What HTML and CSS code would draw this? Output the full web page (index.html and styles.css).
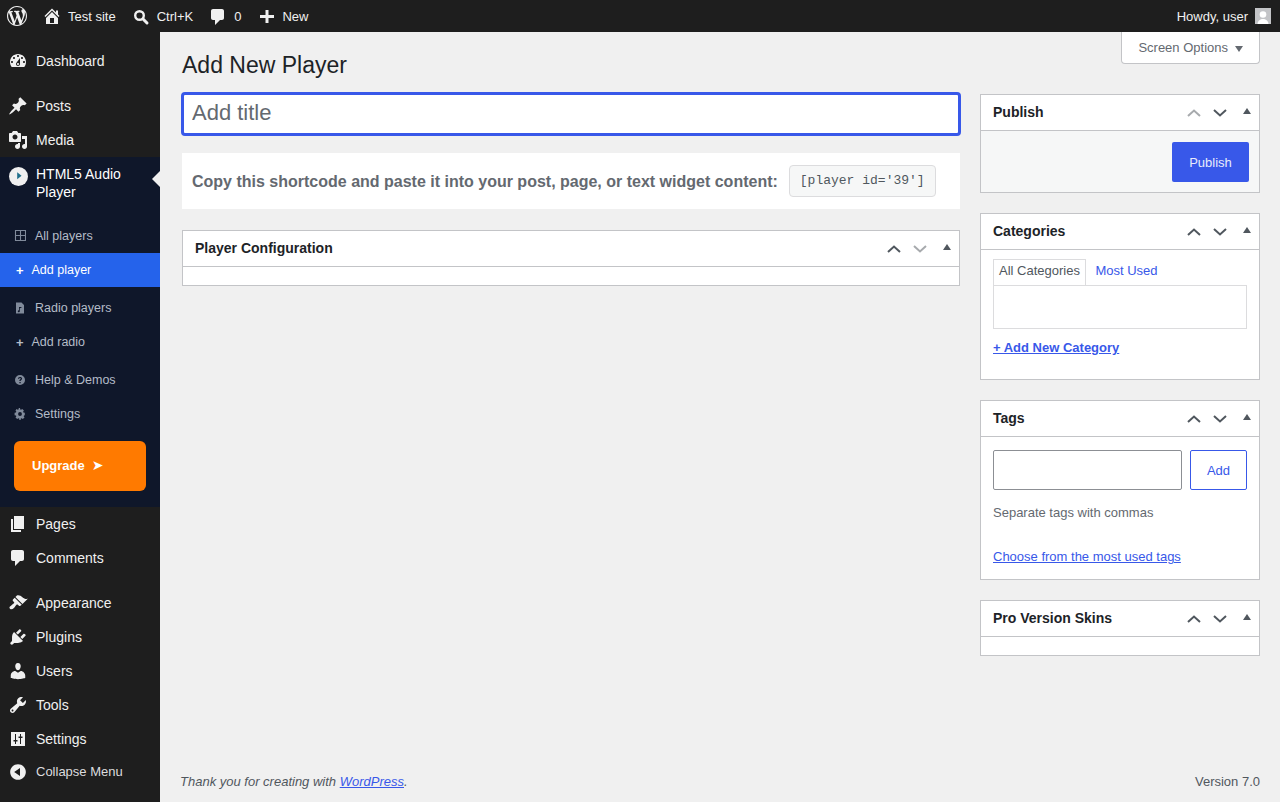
FILE: index.html
```html
<!DOCTYPE html>
<html lang="en">
<head>
  <meta charset="UTF-8" />
  <title>Add New Player</title>
  <link rel="stylesheet" href="styles.css">
</head>
<body>

  <!-- top bar -->
  <header class="adminbar">
    <div class="bar-group">
      <a class="bar-item bar-logo"><svg class="bar-icon logo-icon" viewBox="0 0 20 20"><path d="M20 10c0-5.51-4.49-10-10-10C4.480 0 0 4.490 0 10c0 5.520 4.480 10 10 10 5.510 0 10-4.480 10-10zM7.780 15.370L4.370 6.220c.550-.020 1.170-.080 1.170-.080.500-.060.440-1.130-.060-1.110 0 0-1.450.110-2.370.110-.180 0-.370 0-.580-.010C4.120 2.690 6.890 1.050 10 1.050c2.320 0 4.430.870 6.030 2.320-.680-.110-1.650.390-1.650 1.580 0 .740.450 1.360.900 2.100.350.610.550 1.360.550 2.460 0 1.490-1.400 5-1.400 5l-3.030-8.350c.540-.020.820-.170.820-.170.500-.050.440-1.250-.060-1.220 0 0-1.440.120-2.380.120-.870 0-2.330-.120-2.330-.120-.500-.030-.560 1.200-.060 1.220l.920.080 1.260 3.410zM17.410 10c.240-.640.740-1.870.430-4.250.700 1.290 1.050 2.710 1.050 4.250 0 3.290-1.730 6.240-4.400 7.780.970-2.590 1.940-5.200 2.920-7.780zM6.100 18.090C3.120 16.650 1.110 13.530 1.110 10c0-1.300.230-2.480.720-3.590C3.250 10.300 4.670 14.200 6.100 18.090zm4.030-6.630l2.580 6.980c-.860.290-1.760.450-2.710.450-.790 0-1.570-.110-2.290-.330.810-2.380 1.620-4.740 2.420-7.100z"/></svg></a>
      <a class="bar-item"><svg class="bar-icon" viewBox="0 0 20 20"><path d="M16 8.500l1.530 1.530-1.060 1.060L10 4.620l-6.470 6.470-1.060-1.060L10 2.500l4 4v-2h2v4zm-6-2.460l6 5.990V18H4v-5.970zM12 17v-5H8v5h4z"/></svg>Test site</a>
      <a class="bar-item bar-search"><svg class="bar-icon" viewBox="0 0 20 20"><circle class="loupe" cx="7.500" cy="9.500" r="4.300"/><path class="loupe-handle" d="M11.300 13.300L15 17"/></svg>Ctrl+K</a>
      <a class="bar-item bar-comments"><svg class="bar-icon" viewBox="0 0 20 20"><path d="M5 2h9c1.100 0 2 .9 2 2v7c0 1.100-.9 2-2 2h-2l-5 5v-5H5c-1.100 0-2-.9-2-2V4c0-1.100.9-2 2-2z"/></svg>0</a>
      <a class="bar-item bar-new"><svg class="bar-icon" viewBox="0 0 20 20"><path d="M17 9v3h-5.500v5h-3v-5H3V9h5.500V4h3v5z"/></svg>New</a>
    </div>
    <a class="bar-item bar-user">Howdy, user<span class="avatar"><svg viewBox="0 0 16 16"><circle cx="8" cy="6.500" r="3.300"/><path d="M2.500 16c.3-3.500 2.800-5 5.500-5s5.200 1.500 5.500 5z"/></svg></span></a>
  </header>

  <div class="layout">

    <!-- left menu -->
    <nav class="sidebar">
      <a class="menu-item"><svg class="menu-icon" viewBox="0 0 20 20"><path d="M3.760 16h12.480c1.100-1.370 1.760-3.110 1.760-5 0-4.420-3.580-8-8-8s-8 3.580-8 8c0 1.890.66 3.630 1.760 5zM10 4c.55 0 1 .45 1 1s-.45 1-1 1-1-.45-1-1 .45-1 1-1zM6 6c.55 0 1 .45 1 1s-.45 1-1 1-1-.45-1-1 .45-1 1-1zm8 0c.55 0 1 .45 1 1s-.45 1-1 1-1-.45-1-1 .45-1 1-1zm-5.370 5.550L12 7v6c0 1.100-.9 2-2 2s-2-.9-2-2c0-.57.24-1.080.63-1.450zM4 10c.55 0 1 .45 1 1s-.45 1-1 1-1-.45-1-1 .45-1 1-1zm12 0c.55 0 1 .45 1 1s-.45 1-1 1-1-.45-1-1 .45-1 1-1zm-5 3c0-.55-.45-1-1-1s-1 .45-1 1 .45 1 1 1 1-.45 1-1z"/></svg>Dashboard</a>

      <div class="menu-group">
        <a class="menu-item"><svg class="menu-icon" viewBox="0 0 20 20"><path d="M10.440 3.020l1.820-1.820 6.360 6.350-1.830 1.820c-1.050-.68-2.480-.57-3.410.36l-.75.75c-.92.93-1.040 2.350-.35 3.410l-1.830 1.820-2.410-2.410-2.800 2.790c-.42.42-3.380 2.710-3.800 2.290s1.860-3.390 2.280-3.810l2.790-2.790L4.100 9.360l1.830-1.820c1.050.69 2.480.57 3.400-.36l.75-.75c.93-.92 1.050-2.350.36-3.410z"/></svg>Posts</a>
        <a class="menu-item"><svg class="menu-icon" viewBox="0 0 20 20"><path d="M13 11V4c0-.55-.45-1-1-1h-1.670L9 1H5L3.670 3H2c-.55 0-1 .45-1 1v7c0 .55.45 1 1 1h10c.55 0 1-.45 1-1zM7 4.500c1.380 0 2.500 1.120 2.500 2.500S8.380 9.500 7 9.500 4.500 8.380 4.500 7 5.620 4.500 7 4.500zM14 6h5v10.500c0 1.380-1.120 2.500-2.500 2.500S14 17.880 14 16.500s1.120-2.500 2.500-2.500c.17 0 .34.02.5.05V9h-3V6zm-4 8.050V13h2v3.500c0 1.380-1.120 2.500-2.500 2.500S7 17.880 7 16.500 8.120 14 9.500 14c.17 0 .34.02.5.05z"/></svg>Media</a>
      </div>

      <!-- open plugin menu -->
      <div class="plugin-menu">
        <a class="plugin-head">
          <span class="player-icon"><svg viewBox="0 0 20 20"><circle class="player-disc" cx="10" cy="10" r="10"/><path class="player-tri" d="M8.600 5.400l4.600 3.700-4.600 3.700z"/></svg></span>
          <span>HTML5 Audio Player</span>
        </a>
        <div class="sub-group">
          <a class="sub-item"><svg class="sub-icon" viewBox="0 0 12 12"><path class="grid-lines" d="M1.500.5h10v10h-10zM6.500.5v10M1.500 5.500h10"/></svg>All players</a>
          <a class="sub-item sub-add is-current"><span class="sub-plus">+</span>Add player</a>
        </div>
        <div class="sub-group">
          <a class="sub-item"><svg class="sub-icon" viewBox="0 0 12 12"><path d="M2 .5h5.500L10 3v8.500H2zM5 5v3.300a1 1 0 1 0 .8 1V6.200l1.700-.4V5z" fill-rule="evenodd"/></svg>Radio players</a>
          <a class="sub-item sub-add"><span class="sub-plus">+</span>Add radio</a>
        </div>
        <div class="sub-group">
          <a class="sub-item"><svg class="sub-icon" viewBox="0 0 12 12"><path d="M6 1a5 5 0 1 1 0 10A5 5 0 0 1 6 1zm-.6 6.900v1.300h1.300V7.900zM6 2.900c-1.200 0-2 .7-2.100 1.800h1.200c.1-.5.400-.8.900-.8s.8.300.8.700c0 .9-1.500.9-1.500 2.500h1.300c0-1.100 1.500-1.200 1.500-2.600 0-1-.9-1.600-2.100-1.600z" fill-rule="evenodd"/></svg>Help &amp; Demos</a>
          <a class="sub-item"><svg class="sub-icon" viewBox="0 0 20 20"><path d="M18 12v-4l-2.300-.4-.6-1.400 1.400-1.900-2.800-2.800-1.900 1.400-1.400-.6L10 0H8l-.4 2.300-1.400.6-1.900-1.400-1.800 2.800 1.400 1.900-.6 1.400L1 8v4l2.300.4.600 1.400-1.400 1.900 2.800 2.800 1.900-1.400 1.400.6L9 20h2l.4-2.300 1.400-.6 1.900 1.400 2.800-2.800-1.400-1.900.6-1.400zM10 13.200a3.200 3.200 0 1 1 0-6.400 3.200 3.200 0 0 1 0 6.400z" fill-rule="evenodd"/></svg>Settings</a>
        </div>
        <a class="upgrade-btn"><span class="upgrade-label">Upgrade</span><span class="upgrade-arrow">➤</span></a>
      </div>

      <a class="menu-item"><svg class="menu-icon" viewBox="0 0 20 20"><path d="M6 15V2h10v13H6zm-1 1h8v2H3V5h2v11z"/></svg>Pages</a>
      <a class="menu-item"><svg class="menu-icon" viewBox="0 0 20 20"><path d="M5 2h9c1.100 0 2 .9 2 2v7c0 1.100-.9 2-2 2h-2l-5 5v-5H5c-1.100 0-2-.9-2-2V4c0-1.100.9-2 2-2z"/></svg>Comments</a>

      <div class="menu-group">
        <a class="menu-item"><svg class="menu-icon" viewBox="0 0 20 20"><path d="M14.480 11.060L7.410 3.990l1.500-1.500c.5-.56 2.300-.47 3.510.32 1.210.8 1.430 1.280 2.910 2.100 1.180.64 2.450 1.260 4.450.85zm-.71.71L6.700 4.700 4.930 6.470c-.39.39-.39 1.020 0 1.410l1.060 1.060c.39.39.39 1.030 0 1.420-.6.6-1.430 1.110-2.210 1.690-.35.26-.7.53-1.010.84C1.430 13.230.99 14.790 2 15.800c.99 1 2.570.55 3.930-.83.31-.31.58-.66.85-1.020.58-.78 1.090-1.610 1.690-2.210.39-.39 1.020-.39 1.410 0l1.060 1.060c.39.39 1.020.39 1.410 0z"/></svg>Appearance</a>
        <a class="menu-item"><svg class="menu-icon" viewBox="0 0 20 20"><path d="M13.110 4.360L9.870 7.600 8 5.730l3.240-3.240c.35-.34 1.050-.2 1.560.32.52.51.66 1.210.31 1.550zm-8 1.770l.91-1.120 9.010 9.010-1.190.84c-.71.71-2.630 1.160-3.820 1.160H6.140L4.900 17.260c-.59.59-1.540.59-2.120 0-.59-.58-.59-1.530 0-2.120l1.240-1.240v-3.880c0-1.130.4-3.190 1.090-3.890zm7.260 3.970l3.240-3.240c.34-.35 1.040-.21 1.550.31.52.51.66 1.210.31 1.550l-3.240 3.250z"/></svg>Plugins</a>
        <a class="menu-item"><svg class="menu-icon" viewBox="0 0 20 20"><path d="M10 9.250c-2.270 0-2.730-3.440-2.730-3.440C7 4.020 7.820 2 9.970 2c2.160 0 2.980 2.020 2.710 3.810 0 0-.41 3.440-2.680 3.440zm0 2.570L12.720 10c2.390 0 4.520 2.330 4.520 4.530v2.490s-3.650 1.130-7.240 1.130c-3.650 0-7.240-1.130-7.240-1.130v-2.490c0-2.250 1.940-4.480 4.470-4.480z"/></svg>Users</a>
        <a class="menu-item"><svg class="menu-icon" viewBox="0 0 20 20"><path d="M16.680 9.770c-1.340 1.340-3.300 1.670-4.950.99l-5.410 6.520c-.99.99-2.590.99-3.580 0s-.99-2.59 0-3.570l6.520-5.420c-.68-1.650-.35-3.610.99-4.950 1.280-1.280 3.120-1.620 4.720-1.060l-2.890 2.890 2.820 2.820 2.860-2.870c.53 1.580.18 3.390-1.080 4.650zM3.810 16.210c.4.39 1.040.39 1.430 0 .4-.4.4-1.040 0-1.430-.39-.4-1.030-.4-1.430 0-.39.39-.39 1.030 0 1.430z"/></svg>Tools</a>
        <a class="menu-item"><svg class="menu-icon" viewBox="0 0 20 20"><path d="M3 3h14v14H3zM8 11h1.500v1.500H8V15H7v-2.500H5.500V11H7V5h1zm5-2h1.500V7.500H13V5h-1v2.500h-1.500V9H12v6h1z" fill-rule="evenodd"/></svg>Settings</a>
      </div>
      <a class="menu-item menu-collapse"><svg class="menu-icon" viewBox="0 0 20 20"><path d="M10 2.160c4.330 0 7.840 3.510 7.840 7.840s-3.510 7.840-7.840 7.840S2.160 14.330 2.160 10 5.710 2.160 10 2.160zm2 11.720V6.120L6.180 9.970z"/></svg><span class="collapse-label">Collapse Menu</span></a>
    </nav>

    <!-- page body -->
    <main class="content">
      <a class="screen-options">Screen Options<span class="caret-down"></span></a>
      <h1 class="page-title">Add New Player</h1>

      <div class="columns">
        <div class="col-main">
          <input class="title-input" type="text" placeholder="Add title">
          <div class="shortcode-box">
            <span class="shortcode-label">Copy this shortcode and paste it into your post, page, or text widget content:</span>
            <code class="shortcode">[player id='39']</code>
          </div>
          <section class="postbox">
            <div class="postbox-head">
              <h2>Player Configuration</h2>
              <div class="handles">
                <span class="handle"><svg class="chev" viewBox="0 0 14 8"><path d="M1 7l6-5.500L13 7"/></svg></span>
                <span class="handle is-off"><svg class="chev" viewBox="0 0 14 8"><path d="M1 1l6 5.500L13 1"/></svg></span>
                <span class="handle"><span class="caret-up"></span></span>
              </div>
            </div>
            <div class="postbox-empty"></div>
          </section>
        </div>

        <aside class="col-side">
          <section class="postbox">
            <div class="postbox-head">
              <h2>Publish</h2>
              <div class="handles">
                <span class="handle is-off"><svg class="chev" viewBox="0 0 14 8"><path d="M1 7l6-5.500L13 7"/></svg></span>
                <span class="handle"><svg class="chev" viewBox="0 0 14 8"><path d="M1 1l6 5.500L13 1"/></svg></span>
                <span class="handle"><span class="caret-up"></span></span>
              </div>
            </div>
            <div class="publish-row"><a class="btn-primary">Publish</a></div>
          </section>

          <section class="postbox">
            <div class="postbox-head">
              <h2>Categories</h2>
              <div class="handles">
                <span class="handle"><svg class="chev" viewBox="0 0 14 8"><path d="M1 7l6-5.500L13 7"/></svg></span>
                <span class="handle"><svg class="chev" viewBox="0 0 14 8"><path d="M1 1l6 5.500L13 1"/></svg></span>
                <span class="handle"><span class="caret-up"></span></span>
              </div>
            </div>
            <div class="cat-body">
              <div class="cat-tabs">
                <span class="cat-tab is-active">All Categories</span>
                <a class="cat-tab">Most Used</a>
              </div>
              <div class="cat-panel"></div>
              <a class="add-cat">+ Add New Category</a>
            </div>
          </section>

          <section class="postbox">
            <div class="postbox-head">
              <h2>Tags</h2>
              <div class="handles">
                <span class="handle"><svg class="chev" viewBox="0 0 14 8"><path d="M1 7l6-5.500L13 7"/></svg></span>
                <span class="handle"><svg class="chev" viewBox="0 0 14 8"><path d="M1 1l6 5.500L13 1"/></svg></span>
                <span class="handle"><span class="caret-up"></span></span>
              </div>
            </div>
            <div class="tags-body">
              <div class="tags-row">
                <input class="tags-input" type="text">
                <a class="btn-outline">Add</a>
              </div>
              <p class="tags-hint">Separate tags with commas</p>
              <a class="tags-link">Choose from the most used tags</a>
            </div>
          </section>

          <section class="postbox">
            <div class="postbox-head">
              <h2>Pro Version Skins</h2>
              <div class="handles">
                <span class="handle"><svg class="chev" viewBox="0 0 14 8"><path d="M1 7l6-5.500L13 7"/></svg></span>
                <span class="handle"><svg class="chev" viewBox="0 0 14 8"><path d="M1 1l6 5.500L13 1"/></svg></span>
                <span class="handle"><span class="caret-up"></span></span>
              </div>
            </div>
            <div class="postbox-empty"></div>
          </section>
        </aside>
      </div>

      <footer class="page-footer">
        <span class="thanks">Thank you for creating with <a>WordPress</a>.</span>
        <span>Version 7.0</span>
      </footer>
    </main>
  </div>

</body>
</html>
```

FILE: styles.css
```css
/* reset and base */
* {
  margin: 0;
  padding: 0;
  box-sizing: border-box;
}

html, body {
  height: 802px;
  overflow: hidden;
}

body {
  display: flex;
  flex-direction: column;
  background: #f0f0f0;
  font-family: "Liberation Sans", Arial, sans-serif;
  font-size: 13px;
  color: #1d2327;
}

/* top bar */
.adminbar {
  display: flex;
  justify-content: space-between;
  align-items: center;
  flex: 0 0 32px;
  background: #1e1e1e;
  color: #f0f0f0;
}

.bar-group {
  display: flex;
  align-items: center;
}

.bar-item {
  display: flex;
  align-items: center;
  height: 32px;
  padding: 0 8px;
  white-space: nowrap;
}

.bar-icon {
  width: 20px;
  height: 20px;
  margin-right: 6px;
  fill: #f0f0f0;
}

.bar-logo {
  padding: 0 7px;
}

.logo-icon {
  margin-right: 0;
}

.bar-search .bar-icon {
  margin-right: 5px;
}

.loupe {
  fill: none;
  stroke: #f0f0f0;
  stroke-width: 2.400;
}

.loupe-handle {
  fill: none;
  stroke: #f0f0f0;
  stroke-width: 3;
  stroke-linecap: round;
}

.bar-comments {
  padding-left: 7px;
}

.bar-comments .bar-icon {
  margin-top: 2px;
}

.bar-new .bar-icon {
  margin-right: 5px;
}

.bar-user {
  padding-right: 9px;
}

.avatar {
  display: block;
  width: 16px;
  height: 16px;
  margin-left: 7px;
  background: #c3c4c7;
}

.avatar svg {
  display: block;
  width: 16px;
  height: 16px;
  fill: #fff;
}

/* layout */
.layout {
  display: flex;
  flex: 1;
  min-height: 0;
}

/* left menu */
.sidebar {
  flex: 0 0 160px;
  padding-top: 12px;
  background: #1e1e1e;
  color: #f0f0f0;
  font-size: 14px;
}

.menu-group {
  margin-top: 11px;
}

.menu-item {
  display: flex;
  align-items: center;
  height: 34px;
}

.menu-icon {
  flex: 0 0 20px;
  width: 20px;
  height: 20px;
  margin: 0 8px;
  fill: #f0f0f0;
}

.menu-collapse {
  height: 32px;
  font-size: 13px;
  color: #dcdcde;
}

.collapse-label {
  margin-top: -1px;
}

/* open plugin menu */
.plugin-menu {
  position: relative;
  background: #0f172a;
  padding-bottom: 16px;
}

/* small arrow that points at the page */
.plugin-menu::after {
  content: "";
  position: absolute;
  top: 14px;
  right: 0;
  border: 8px solid transparent;
  border-right-color: #f0f0f0;
  border-left-width: 0;
}

.plugin-head {
  display: flex;
  padding: 8px 8px 18px 0;
  line-height: 18px;
  color: #fff;
}

.player-icon {
  flex: 0 0 19px;
  width: 19px;
  height: 19px;
  margin: 2px 8px 0 9px;
}

.player-icon svg {
  display: block;
  width: 19px;
  height: 19px;
}

.player-disc {
  fill: #f0f0f0;
}

.player-tri {
  fill: #1f6f8b;
}

.sub-group {
  margin-bottom: 4px;
}

.sub-item {
  display: flex;
  align-items: center;
  height: 34px;
  padding-left: 14px;
  font-size: 12.500px;
  color: #b4bcc8;
}

.sub-icon {
  flex: 0 0 12px;
  width: 12px;
  height: 12px;
  margin-right: 9px;
  fill: #808a9a;
}

.grid-lines {
  fill: none;
  stroke: #808a9a;
  stroke-width: 1.100;
}

.sub-add {
  padding-left: 16px;
}

.sub-plus {
  flex: 0 0 15.500px;
  font-weight: bold;
  font-size: 13px;
}

.sub-item.is-current {
  background: #2563eb;
  color: #fff;
}

.upgrade-btn {
  display: flex;
  align-items: center;
  height: 50px;
  margin: 10px 14px 0;
  padding: 0 0 2px 18px;
  background: #ff7a00;
  border-radius: 6px;
  color: #fff;
  font-size: 13px;
  font-weight: bold;
}

.upgrade-arrow {
  margin-left: 7px;
  font-family: "DejaVu Sans", sans-serif;
  font-size: 14px;
  font-weight: normal;
}

/* page body */
.content {
  position: relative;
  display: flex;
  flex-direction: column;
  flex: 1;
  min-width: 0;
  padding: 0 20px 0 22px;
}

.screen-options {
  position: absolute;
  top: 0;
  right: 20px;
  display: flex;
  align-items: center;
  height: 32px;
  padding: 0 16px 0 16px;
  background: #fff;
  border: 1px solid #c3c4c7;
  border-top: 0;
  border-radius: 0 0 4px 4px;
  color: #646970;
}

.caret-down {
  width: 0;
  height: 0;
  margin-left: 7px;
  margin-top: 3px;
  border-left: 4px solid transparent;
  border-right: 4px solid transparent;
  border-top: 6px solid #646970;
}

.page-title {
  padding-top: 18px;
  margin-bottom: 12px;
  font-size: 23px;
  font-weight: 400;
  line-height: 30px;
  color: #1d2327;
}

.columns {
  display: flex;
  gap: 20px;
  flex: 1;
}

.col-main {
  flex: 1;
  min-width: 0;
}

.col-side {
  flex: 0 0 280px;
  padding-top: 2px;
}

.col-side .postbox {
  margin-bottom: 20px;
}

.title-input {
  display: block;
  width: 780px;
  height: 44px;
  margin-left: -1px;
  padding: 0 8px 2px;
  font: 22px "Liberation Sans", Arial, sans-serif;
  color: #1d2327;
  background: #fff;
  border: 3px solid #3858e9;
  border-radius: 4px;
  outline: none;
}

.title-input::placeholder {
  color: #646970;
  opacity: 1;
}

.shortcode-box {
  display: flex;
  align-items: center;
  height: 56px;
  margin-top: 17px;
  padding: 0 10px;
  background: #fff;
}

.shortcode-label {
  margin-top: 2px;
  font-size: 16px;
  font-weight: bold;
  color: #646970;
  white-space: nowrap;
}

.shortcode {
  margin-left: 11px;
  padding: 0 10px;
  height: 32px;
  line-height: 30px;
  font-family: "Liberation Mono", monospace;
  font-size: 13px;
  color: #50575e;
  background: #f6f7f7;
  border: 1px solid #dcdcde;
  border-radius: 4px;
}

/* boxes */
.postbox {
  background: #fff;
  border: 1px solid #c3c4c7;
}

.col-main .postbox {
  margin-top: 21px;
}

.postbox-head {
  display: flex;
  justify-content: space-between;
  align-items: center;
  height: 36px;
  padding-left: 12px;
  border-bottom: 1px solid #c3c4c7;
}

.postbox-head h2 {
  margin-top: -2px;
  font-size: 14px;
  font-weight: bold;
  color: #1d2327;
}

.handles {
  display: flex;
}

.handle {
  display: flex;
  justify-content: center;
  align-items: center;
  width: 26px;
  height: 35px;
}

.chev {
  width: 14px;
  height: 8px;
  fill: none;
  stroke: #50575e;
  stroke-width: 2;
}

.handle.is-off .chev {
  stroke: #a7aaad;
}

.caret-up {
  width: 0;
  height: 0;
  margin: 0 0 3px 2px;
  border-left: 4px solid transparent;
  border-right: 4px solid transparent;
  border-bottom: 6px solid #50575e;
}

.postbox-empty {
  height: 18px;
}

/* publish */
.publish-row {
  display: flex;
  justify-content: flex-end;
  padding: 11px 10px 10px;
  background: #f6f7f7;
}

.btn-primary {
  display: flex;
  justify-content: center;
  align-items: center;
  width: 77px;
  height: 40px;
  background: #3858e9;
  border-radius: 2px;
  color: #e8ebfb;
}

/* categories */
.cat-body {
  padding: 9px 12px 24px;
}

.cat-tabs {
  display: flex;
}

.cat-tab {
  height: 26px;
  line-height: 24px;
  padding: 0 9.500px;
  color: #3858e9;
}

.cat-tab.is-active {
  padding: 0 5px;
  line-height: 22px;
  color: #50575e;
  background: #fff;
  border: 1px solid #dcdcde;
  border-bottom: 0;
}

.cat-panel {
  height: 44px;
  border: 1px solid #dcdcde;
}

.add-cat {
  display: block;
  margin-top: 11px;
  line-height: 15px;
  font-weight: bold;
  color: #3858e9;
  text-decoration: underline;
}

/* tags */
.tags-body {
  padding: 13px 12px 14px;
}

.tags-row {
  display: flex;
  justify-content: space-between;
}

.tags-input {
  width: 189px;
  height: 40px;
  background: #fff;
  border: 1px solid #8c8f94;
  border-radius: 2px;
  outline: none;
}

.btn-outline {
  display: flex;
  justify-content: center;
  align-items: center;
  width: 57px;
  height: 40px;
  border: 1px solid #3858e9;
  border-radius: 2px;
  color: #3858e9;
}

.tags-hint {
  margin-top: 14px;
  line-height: 17px;
  color: #646970;
}

.tags-link {
  display: block;
  margin-top: 27px;
  line-height: 17px;
  color: #3858e9;
  text-decoration: underline;
}

/* footer */
.page-footer {
  display: flex;
  justify-content: space-between;
  margin-left: -2px;
  padding-bottom: 12px;
  line-height: 16px;
  color: #50575e;
}

.thanks {
  font-style: italic;
}

.thanks a {
  color: #3858e9;
  text-decoration: underline;
}
```
